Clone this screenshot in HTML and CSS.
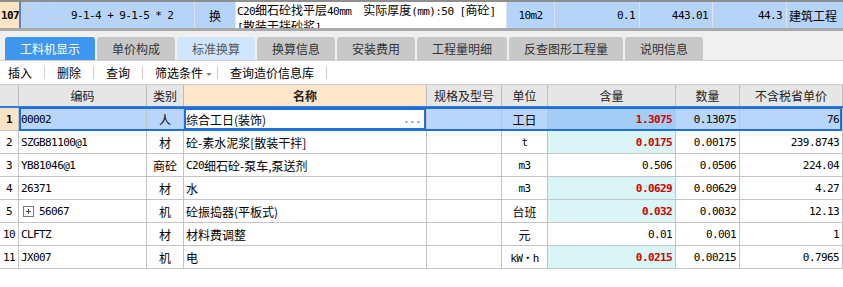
FILE: index.html
```html
<!DOCTYPE html>
<html lang="zh-CN">
<head>
  <meta charset="UTF-8" />
  <title>工料机显示</title>
  <link rel="stylesheet" href="styles.css">
</head>
<body>
  <div class="page">
    <!-- 定额行 -->
    <div class="top">
      <div class="id mono">107</div>
      <div class="tree">
        <svg width="50" height="26" viewBox="0 0 50 26">
          <path d="M7.5 0V26M12.5 0V26M28.5 0V26M28 15.5H41" stroke="#c9d3e0" stroke-width="1" fill="none"/>
        </svg>
        <span class="mono">9-1-4 + 9-1-5 * 2</span>
      </div>
      <div class="mid">换</div>
      <div class="desc"><span class="mono">C20</span>细石砼找平层<span class="mono">40mm&nbsp;&nbsp;</span>实际厚度<span class="mono">(mm):50 [</span>商砼<span class="mono">]</span><br><span class="mono">[</span>散装干拌砂浆<span class="mono">]</span></div>
      <div class="mid mono">10m2</div>
      <div class="num mono">0.1</div>
      <div class="num mono">443.01</div>
      <div class="num mono">44.3</div>
      <div class="txt">建筑工程</div>
    </div>
    <div class="split"></div>

    <!-- 标签页 -->
    <div class="tabs">
      <div class="tab on w90">工料机显示</div>
      <div class="tab">单价构成</div>
      <div class="tab alt">标准换算</div>
      <div class="tab">换算信息</div>
      <div class="tab">安装费用</div>
      <div class="tab w90">工程量明细</div>
      <div class="tab w114">反查图形工程量</div>
      <div class="tab">说明信息</div>
    </div>

    <!-- 工具栏 -->
    <div class="tools">
      <span class="tb first">插入</span>
      <span class="tb">删除</span>
      <span class="tb">查询</span>
      <span class="tb drop">筛选条件<i class="caret"></i></span>
      <span class="tb">查询造价信息库</span>
    </div>

    <!-- 表格 -->
    <div class="grid">
      <div class="row head">
        <div></div>
        <div>编码</div>
        <div>类别</div>
        <div class="sorted">名称</div>
        <div>规格及型号</div>
        <div>单位</div>
        <div>含量</div>
        <div>数量</div>
        <div>不含税省单价</div>
      </div>

      <div class="row sel">
        <div class="no mono">1</div>
        <div class="code mono">00002</div>
        <div class="c">人</div>
        <div class="name edit">综合工日(装饰)<span class="dots mono">...</span></div>
        <div></div>
        <div class="c">工日</div>
        <div class="n mono r qty">1.3075</div>
        <div class="n mono">0.13075</div>
        <div class="n mono">76</div>
      </div>

      <div class="row">
        <div class="no mono">2</div>
        <div class="code mono">SZGB81100@1</div>
        <div class="c">材</div>
        <div class="name">砼-素水泥浆[散装干拌]</div>
        <div></div>
        <div class="c mono">t</div>
        <div class="n mono r qty">0.0175</div>
        <div class="n mono">0.00175</div>
        <div class="n mono">239.8743</div>
      </div>

      <div class="row">
        <div class="no mono">3</div>
        <div class="code mono">YB81046@1</div>
        <div class="c">商砼</div>
        <div class="name"><span class="mono">C20</span>细石砼-泵车,泵送剂</div>
        <div></div>
        <div class="c mono">m3</div>
        <div class="n mono">0.506</div>
        <div class="n mono">0.0506</div>
        <div class="n mono">224.04</div>
      </div>

      <div class="row">
        <div class="no mono">4</div>
        <div class="code mono">26371</div>
        <div class="c">材</div>
        <div class="name">水</div>
        <div></div>
        <div class="c mono">m3</div>
        <div class="n mono r qty">0.0629</div>
        <div class="n mono">0.00629</div>
        <div class="n mono">4.27</div>
      </div>

      <div class="row">
        <div class="no mono">5</div>
        <div class="code mono"><i class="plus"></i>56067</div>
        <div class="c">机</div>
        <div class="name">砼振捣器(平板式)</div>
        <div></div>
        <div class="c">台班</div>
        <div class="n mono r qty">0.032</div>
        <div class="n mono">0.0032</div>
        <div class="n mono">12.13</div>
      </div>

      <div class="row">
        <div class="no mono">10</div>
        <div class="code mono">CLFTZ</div>
        <div class="c">材</div>
        <div class="name">材料费调整</div>
        <div></div>
        <div class="c">元</div>
        <div class="n mono">0.01</div>
        <div class="n mono">0.001</div>
        <div class="n mono">1</div>
      </div>

      <div class="row">
        <div class="no mono">11</div>
        <div class="code mono">JX007</div>
        <div class="c">机</div>
        <div class="name">电</div>
        <div></div>
        <div class="c mono">kW・h</div>
        <div class="n mono r qty">0.0215</div>
        <div class="n mono">0.00215</div>
        <div class="n mono">0.7965</div>
      </div>
    </div>
  </div>
</body>
</html>
```

FILE: styles.css
```css
:root {
  --line: #c4c4c4;
  --row-blue: #b8d6fa;
  --sel: #1e6fd9;
  --peach: #fde4c4;
  --cyan: #d9f5f6;
  --red: #d10000;
}

body {
  margin: 0;
  font-family: "Noto Sans CJK SC", sans-serif;
  font-size: 12px;
  color: #000;
  background: #fff;
}

.page {
  width: 843px;
}

.mono {
  font-family: "DejaVu Sans Mono", "Noto Sans CJK SC", monospace;
  font-size: 11px;
  letter-spacing: -0.6px;
}

/* top row */
.top {
  display: grid;
  grid-template-columns: 21px 174px 41px 271px 48px 85px 73px 74px 56px;
  height: 28px;
  box-sizing: border-box;
  border-top: 2px solid #8e8e8e;
  background: #b6d3f8;
}

.top > div {
  display: flex;
  align-items: center;
  overflow: hidden;
  white-space: nowrap;
  border-right: 1px solid #dbe4ef;
  box-sizing: border-box;
}

.top .id {
  background: var(--peach);
  border-right: 2px solid #6283bc;
  font-weight: bold;
  padding-left: 1px;
}

.top .tree svg { flex: none; }

.top .mid { justify-content: center; }

.top .desc {
  display: block;
  background: #fff;
  white-space: normal;
  font-size: 12px;
  line-height: 14px;
  padding: 1px 0 0 1px;
}

.top .num {
  justify-content: flex-end;
  padding-right: 4px;
}

.top .txt {
  padding-left: 2px;
  border-right: none;
}

.split {
  height: 3px;
  background: #a9a9a9;
}

/* tabs */
.tabs {
  display: flex;
  align-items: flex-end;
  gap: 2px;
  height: 30px;
  box-sizing: border-box;
  padding-left: 5px;
  background: #f0f0f0;
  border-bottom: 1px solid #d2d2d2;
}

.tab {
  width: 78px;
  height: 23px;
  display: flex;
  align-items: center;
  justify-content: center;
  background: #c8c8c8;
  color: #333;
  border-radius: 3px 3px 0 0;
}

.tab.w90 { width: 90px; }
.tab.w114 { width: 114px; }
.tab.on { background: #3f96ee; color: #fff; }
.tab.alt { background: #cfe5fb; color: #555; }

/* toolbar */
.tools {
  display: flex;
  align-items: center;
  height: 23px;
  padding-left: 8px;
}

.tb {
  padding: 0 12px;
  line-height: 13px;
  border-right: 1px solid #cfcfcf;
}

.tb.first { padding-left: 0; }
.tb.drop { padding-right: 5px; }

.caret {
  display: inline-block;
  width: 0;
  height: 0;
  margin-left: 3px;
  vertical-align: middle;
  border-left: 3px solid transparent;
  border-right: 3px solid transparent;
  border-top: 3px solid #8a8a8a;
}

/* grid */
.row {
  display: grid;
  grid-template-columns: 19px 128px 37px 243px 75px 46px 128px 64px 103px;
  height: 23px;
}

.row > div {
  display: flex;
  align-items: center;
  overflow: hidden;
  white-space: nowrap;
  box-sizing: border-box;
  border-right: 1px solid var(--line);
  border-bottom: 1px solid var(--line);
}

.row.head {
  height: 24px;
  box-sizing: border-box;
  border-top: 1px solid #cdcdcd;
  border-bottom: 2px solid #2f7de1;
}

.row.head > div {
  justify-content: center;
  background: #e6e6e6;
  color: #222;
  border-bottom: none;
  border-right-color: #bcbcbc;
}

.row.head > .sorted {
  background: #fde6c9;
  font-weight: bold;
}

.no { justify-content: center; }
.code { padding-left: 2px; }
.name { padding-left: 2px; }
.c { justify-content: center; }
.n { justify-content: flex-end; padding-right: 3px; }
.qty { background: var(--cyan); }
.r { color: var(--red); font-weight: bold; }

.plus {
  display: inline-block;
  position: relative;
  width: 11px;
  height: 11px;
  margin: 0 5px 0 2px;
  border: 1px solid #777;
  box-sizing: border-box;
}

.plus::before,
.plus::after {
  content: "";
  position: absolute;
  background: #444;
}

.plus::before { left: 2px; right: 2px; top: 4px; height: 1px; }
.plus::after { top: 2px; bottom: 2px; left: 4px; width: 1px; }

/* selected row */
.row.sel { position: relative; }

.row.sel::after {
  content: "";
  position: absolute;
  left: 19px;
  right: 1px;
  top: -1px;
  bottom: 0;
  border: 2px solid var(--sel);
  pointer-events: none;
}

.row.sel > div { background: var(--row-blue); }
.row.sel > .no { background: var(--peach); font-weight: bold; }
.row.sel > .qty { background: #a3cdf5; }

.row.sel > .edit {
  background: #fff;
  box-shadow: inset 0 0 0 2px var(--sel);
}

.dots {
  margin-left: auto;
  padding-right: 5px;
  color: #7d9ab8;
  font-weight: bold;
}
```
